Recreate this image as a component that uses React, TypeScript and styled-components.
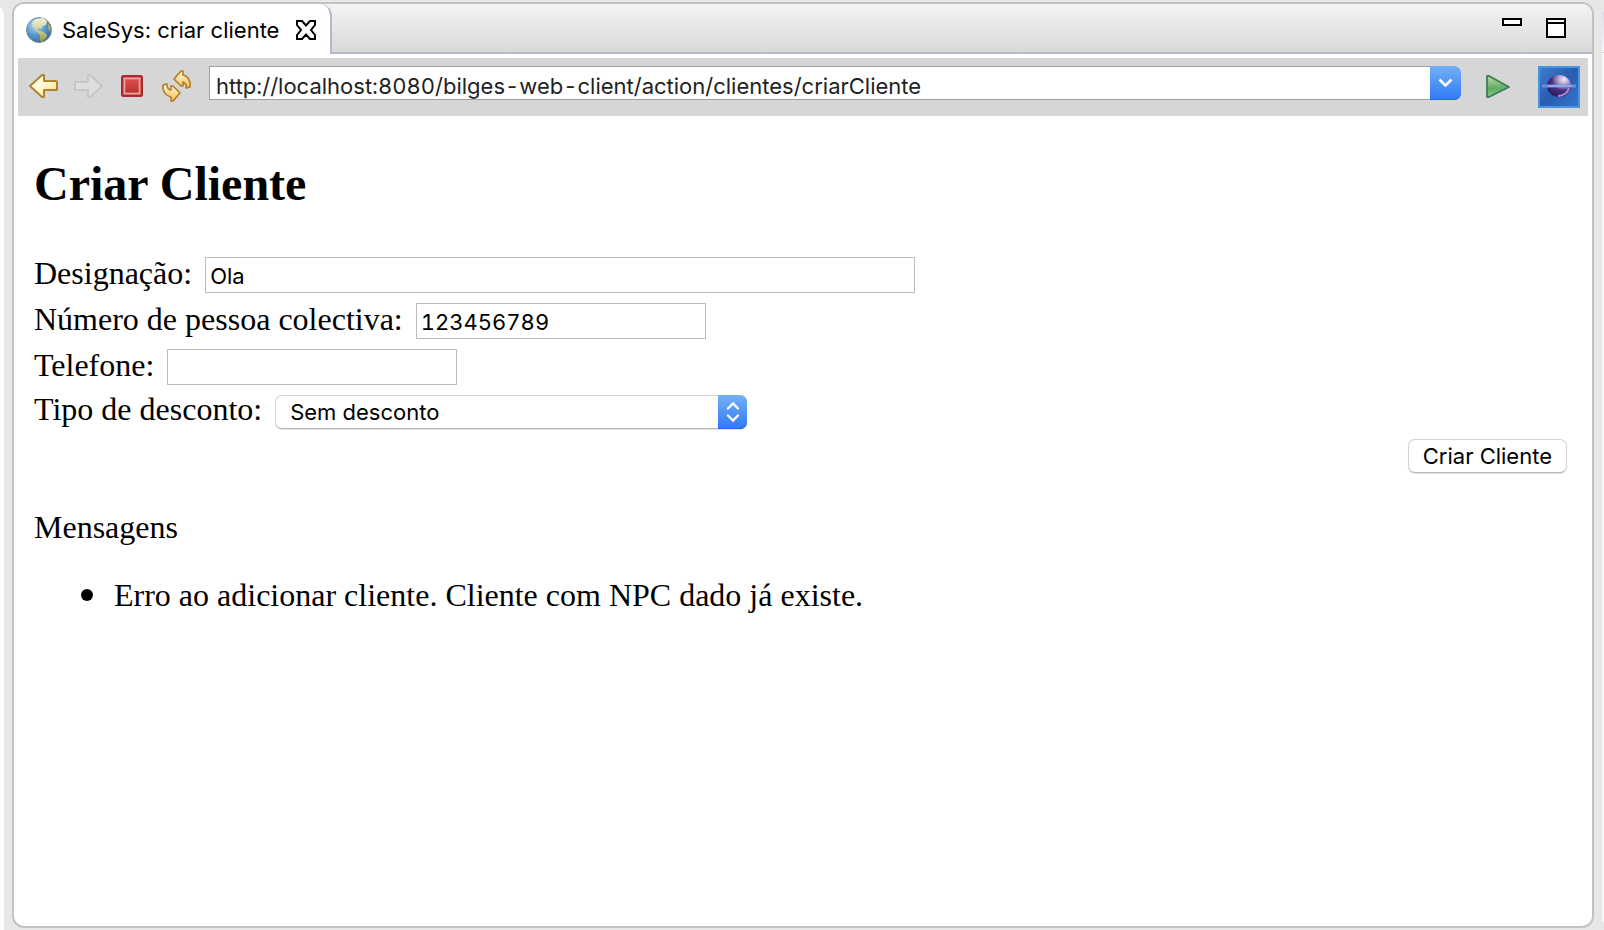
import React from "react";
import styled, { createGlobalStyle } from "styled-components";

const uiFont = `Inter, Roboto, "Liberation Sans", sans-serif`;
const pageFont = `"Liberation Serif", "Times New Roman", serif`;

const GlobalStyle = createGlobalStyle`
  *, *::before, *::after { box-sizing: border-box; }
  body { margin: 0; background: #e7e7e7; color: #000; }
`;

const Workbench = styled.div`
  display: flex;
  gap: 8px;
  min-height: 100vh;
`;

const LeftNeighbour = styled.div`
  flex: 0 0 4px;
  margin-top: 8px;
  background: #fcfcfc;
  border-top-right-radius: 4px 8px;
`;

const RightNeighbour = styled.div`
  flex: 0 0 2px;
  margin: 12px 0 8px;
  background: linear-gradient(#dcdce4, #f6f6f8 40px, #c8c8c8 40px, #c8c8c8 41px, #f8f8f8 41px);
`;

const View = styled.section`
  flex: 1;
  min-width: 0;
  display: flex;
  flex-direction: column;
  margin: 2px 0;
  border: 2px solid #c3c3be;
  border-radius: 12px;
  background: #fff;
  overflow: hidden;
`;

const TabBar = styled.header`
  display: flex;
  justify-content: space-between;
  height: 50px;
  background: linear-gradient(#f4f4f4, #d9d9d9);
  border-bottom: 2px solid #b2b9ca;
`;

const Tab = styled.div`
  display: flex;
  align-items: center;
  height: 50px;
  padding: 2px 14px 0 12px;
  background: #fff;
  border-right: 2px solid #b2b9ca;
  border-top-right-radius: 12px;
`;

const TabTitle = styled.span`
  margin: 0 17px 0 10px;
  font: 22px/28px ${uiFont};
  white-space: nowrap;
`;

const PlainButton = styled.button`
  display: flex;
  align-items: center;
  justify-content: center;
  flex: none;
  padding: 0;
  border: 0;
  background: none;
`;

const ViewControls = styled.div`
  display: flex;
  align-items: flex-start;
  gap: 24px;
  padding: 14px 26px 0 0;
`;

const Toolbar = styled.nav`
  display: flex;
  align-items: flex-start;
  height: 58px;
  margin: 4px 4px 0;
  padding: 8px 8px 0 10px;
  background: #d6d6d6;
`;

const ToolGroup = styled.div`
  display: flex;
  gap: 12px;
`;

const ToolButton = styled(PlainButton)`
  width: 32px;
  height: 40px;
`;

const AddressBox = styled.div`
  flex: 1;
  min-width: 0;
  display: flex;
  height: 34px;
  margin: 0 21px 0 17px;
`;

const AddressInput = styled.input`
  flex: 1;
  min-width: 0;
  padding: 6px 6px 0;
  border: 1px solid #a0a0a0;
  border-right: 0;
  border-radius: 0;
  outline: 0;
  background: #fff;
  color: #222;
  font: 22px/26px ${uiFont};
  font-variant-numeric: tabular-nums;
`;

const AddressArrow = styled(PlainButton)`
  width: 31px;
  border-radius: 0 7px 7px 0;
  background: linear-gradient(#74b0f6, #2f79f7);
  box-shadow: inset 0 -1px #2465ee;
`;

const Brand = styled.div`
  display: flex;
  margin-left: 24px;
`;

const Page = styled.main`
  padding: 0 21px 0 16px;
  margin: 0 4px;
  font: 32px/36px ${pageFont};
`;

const Title = styled.h2`
  margin: 40px 0 45px;
  font-size: 48px;
  line-height: 56px;
`;

const Form = styled.form`
  display: flex;
  flex-direction: column;
  gap: 10px;
`;

const Field = styled.div`
  display: flex;
  align-items: baseline;
  gap: 13px;
`;

const Label = styled.label`
  line-height: 28px;
  white-space: nowrap;
`;

const TextInput = styled.input<{ $wide?: boolean }>`
  width: ${(p) => (p.$wide ? 710 : 290)}px;
  height: 36px;
  padding: 2px 4px 0;
  border: 1px solid #bdbdbd;
  border-radius: 0;
  outline: 0;
  background: #fff;
  color: #000;
  font: 22px/28px ${uiFont};
  font-variant-numeric: tabular-nums;
`;

const SelectWrap = styled.div`
  position: relative;
  width: 472px;
`;

const Select = styled.select`
  display: block;
  appearance: none;
  width: 100%;
  height: 34px;
  padding: 0 40px 0 14px;
  border: 1px solid #d2d2d2;
  border-bottom-color: #b8b8b8;
  border-radius: 7px;
  outline: 0;
  background: #fff;
  box-shadow: 0 1px 1px #e4e4e4;
  color: #000;
  font: 22px/32px ${uiFont};
`;

const SelectArrows = styled.span`
  position: absolute;
  top: 0;
  right: 0;
  display: flex;
  align-items: center;
  justify-content: center;
  width: 29px;
  height: 34px;
  border-radius: 0 7px 7px 0;
  background: linear-gradient(#74b0f6, #2f79f7);
  box-shadow: inset 0 -1px #2465ee;
  pointer-events: none;
`;

const SubmitButton = styled.button`
  align-self: flex-end;
  height: 34px;
  padding: 0 14px;
  border: 1px solid #d2d2d2;
  border-bottom-color: #b8b8b8;
  border-radius: 7px;
  background: #fff;
  box-shadow: 0 1px 1px #e4e4e4;
  color: #000;
  font: 22px/30px ${uiFont};
`;

const Messages = styled.section`
  margin-top: 36px;
`;

const MessageHeading = styled.p`
  margin: 0 0 32px;
`;

const MessageList = styled.ul`
  margin: 0;
  padding-left: 47px;
  list-style: none;
`;

const Message = styled.li`
  display: flex;
  align-items: center;
  gap: 21px;

  &::before {
    content: "";
    flex: none;
    width: 12px;
    height: 12px;
    border-radius: 50%;
    background: #000;
  }
`;

const GlobeIcon = () => (
  <svg width="26" height="26" viewBox="0 0 26 26" aria-hidden="true">
    <defs>
      <radialGradient id="sea" cx=".35" cy=".3" r=".8">
        <stop offset="0" stopColor="#b9d8ee" />
        <stop offset=".5" stopColor="#5b9bcd" />
        <stop offset="1" stopColor="#3a5f8c" />
      </radialGradient>
      <linearGradient id="land" x1="0" y1="0" x2="0" y2="1">
        <stop offset="0" stopColor="#f4f0d2" />
        <stop offset=".5" stopColor="#d2cf9a" />
        <stop offset="1" stopColor="#8f9434" />
      </linearGradient>
    </defs>
    <circle cx="13" cy="13" r="12.5" fill="url(#sea)" stroke="#6c8296" strokeWidth=".8" />
    <path d="M6 5 10 2 17 1 21 4 20 8 17 9 15 12 12 11 11 13 14 14 18 15 21 18 20 21 16 25 14 24 14 18 10 14 7 10Z" fill="url(#land)" />
    <path d="M22 6 25 11 24 15 22 11Z" fill="#a5ab6c" />
  </svg>
);

const CloseIcon = () => (
  <svg width="20" height="20" viewBox="0 0 20 20" fill="#fff" stroke="#000" strokeWidth="2" aria-hidden="true">
    <path d="M1 1H6L10 5.5 14 1H19V5L15 10 19 15V19H14L10 14.5 6 19H1V15L5 10 1 5Z" />
  </svg>
);

const MinimizeIcon = () => (
  <svg width="20" height="8" viewBox="0 0 20 8" fill="#fff" stroke="#000" strokeWidth="2" aria-hidden="true">
    <path d="M1 1H19V7H1Z" />
  </svg>
);

const MaximizeIcon = () => (
  <svg width="20" height="20" viewBox="0 0 20 20" fill="#fff" stroke="#000" strokeWidth="2" aria-hidden="true">
    <path d="M1 1H19V19H1ZM1 5H19" />
  </svg>
);

const ArrowIcon = ({ forward }: { forward?: boolean }) => {
  const shape = forward
    ? "M3 9H16V2H18L30 13 18 24H16V17H3Z"
    : "M29 9V17H16V24H14L2 13 14 2H16V8H28Z";
  return (
    <svg width="32" height="26" viewBox="0 0 32 26" aria-hidden="true">
      <defs>
        <linearGradient id="gold" x1="0" y1="0" x2="1" y2="1">
          <stop offset="0" stopColor="#fff" />
          <stop offset=".5" stopColor="#fff8cf" />
          <stop offset="1" stopColor="#f5d77c" />
        </linearGradient>
      </defs>
      <path
        d={shape}
        fill={forward ? "#dedede" : "url(#gold)"}
        stroke={forward ? "#c6c6c6" : "#b0842d"}
        strokeWidth="2"
        strokeLinejoin="round"
      />
    </svg>
  );
};

const StopIcon = () => (
  <svg width="22" height="22" viewBox="0 0 22 22" aria-hidden="true">
    <defs>
      <linearGradient id="red" x1="0" y1="0" x2="0" y2="1">
        <stop offset="0" stopColor="#db504b" />
        <stop offset="1" stopColor="#b9302e" />
      </linearGradient>
    </defs>
    <rect x="1" y="1" width="20" height="20" rx="1.5" fill="#cc5250" stroke="#ae2830" strokeWidth="2" />
    <rect x="3.5" y="3.5" width="15" height="15" fill="url(#red)" stroke="#eba5a3" strokeWidth="1.6" />
  </svg>
);

const RefreshIcon = () => (
  <svg width="32" height="32" viewBox="-2 0 32 32" aria-hidden="true">
    <defs>
      <linearGradient id="amber" x1="0" y1="0" x2="0" y2="1">
        <stop offset="0" stopColor="#fffbe2" />
        <stop offset="1" stopColor="#f2bf52" />
      </linearGradient>
    </defs>
    <g fill="url(#amber)" stroke="#b37d22" strokeWidth="1.6" strokeLinejoin="round">
      <path d="M12 9 19 1H21V5C26 6 29 11 28 17L24 18C25 15 23 13 21 12V16H19Z" />
      <path d="M18 23 11 31H9V27C4 26 0 21 1 15L5 14C5 18 7 20 9 20V16H11Z" />
    </g>
  </svg>
);

const ChevronIcon = () => (
  <svg width="15" height="10" viewBox="0 0 15 10" fill="none" stroke="#fff" strokeWidth="2.6" aria-hidden="true">
    <path d="M1.5 1.5 7.5 7.5 13.5 1.5" />
  </svg>
);

const UpDownIcon = () => (
  <svg width="14" height="22" viewBox="0 0 14 22" fill="none" stroke="#fff" strokeWidth="2.4" strokeLinecap="round" aria-hidden="true">
    <path d="M2 7.5 7 2.5 12 7.5M2 14.5 7 19.5 12 14.5" />
  </svg>
);

const GoIcon = () => (
  <svg width="24" height="24" viewBox="0 0 24 24" aria-hidden="true">
    <defs>
      <linearGradient id="green" x1="0" y1="0" x2="0" y2="1">
        <stop offset="0" stopColor="#b4dba0" />
        <stop offset=".6" stopColor="#62aa66" />
        <stop offset="1" stopColor="#8cc787" />
      </linearGradient>
    </defs>
    <path d="M1 2H3L23 13 3 23H1Z" fill="url(#green)" stroke="#3d7d58" strokeWidth="1.8" strokeLinejoin="round" />
  </svg>
);

const EclipseLogo = () => (
  <svg width="42" height="42" viewBox="0 0 42 42" role="img" aria-label="Eclipse">
    <defs>
      <linearGradient id="sky" x1="0" y1="0" x2="1" y2="1">
        <stop offset="0" stopColor="#3f7fd0" />
        <stop offset=".5" stopColor="#2a5cb0" />
        <stop offset="1" stopColor="#3576cc" />
      </linearGradient>
      <radialGradient id="moon" cx=".7" cy=".2" r=".85">
        <stop offset="0" stopColor="#f0edf4" />
        <stop offset=".3" stopColor="#a89cc8" />
        <stop offset=".6" stopColor="#42307f" />
        <stop offset="1" stopColor="#2c1a60" />
      </radialGradient>
    </defs>
    <rect x="1" y="1" width="40" height="40" fill="url(#sky)" stroke="#4596e2" strokeWidth="2" />
    <ellipse cx="21" cy="20" rx="12" ry="11" fill="url(#moon)" />
    <path d="M31 22A11 10 0 0 1 20 30" fill="none" stroke="#b583d8" strokeWidth="2" />
    <path d="M4 20H38" stroke="#6a8ade" strokeWidth="3" />
    <path d="M10 20H34" stroke="#9aa4e8" strokeWidth="2" />
  </svg>
);

export default function App() {
  return (
    <>
      <GlobalStyle />
      <Workbench>
        <LeftNeighbour />
        <View>
          <TabBar>
            <Tab>
              <GlobeIcon />
              <TabTitle>SaleSys: criar cliente</TabTitle>
              <PlainButton type="button" aria-label="Fechar">
                <CloseIcon />
              </PlainButton>
            </Tab>
            <ViewControls>
              <PlainButton type="button" aria-label="Minimizar">
                <MinimizeIcon />
              </PlainButton>
              <PlainButton type="button" aria-label="Maximizar">
                <MaximizeIcon />
              </PlainButton>
            </ViewControls>
          </TabBar>
          <Toolbar>
            <ToolGroup>
              <ToolButton type="button" aria-label="Recuar">
                <ArrowIcon />
              </ToolButton>
              <ToolButton type="button" aria-label="Avançar" disabled>
                <ArrowIcon forward />
              </ToolButton>
              <ToolButton type="button" aria-label="Parar">
                <StopIcon />
              </ToolButton>
              <ToolButton type="button" aria-label="Atualizar">
                <RefreshIcon />
              </ToolButton>
            </ToolGroup>
            <AddressBox>
              <AddressInput
                type="text"
                aria-label="Endereço"
                defaultValue="http://localhost:8080/bilges-web-client/action/clientes/criarCliente"
              />
              <AddressArrow type="button" aria-label="Histórico">
                <ChevronIcon />
              </AddressArrow>
            </AddressBox>
            <ToolButton type="button" aria-label="Ir">
              <GoIcon />
            </ToolButton>
            <Brand>
              <EclipseLogo />
            </Brand>
          </Toolbar>
          <Page>
            <Title>Criar Cliente</Title>
            <Form onSubmit={(e) => e.preventDefault()}>
              <Field>
                <Label htmlFor="designacao">Designação:</Label>
                <TextInput id="designacao" type="text" $wide defaultValue="Ola" />
              </Field>
              <Field>
                <Label htmlFor="npc">Número de pessoa colectiva:</Label>
                <TextInput id="npc" type="text" defaultValue="123456789" />
              </Field>
              <Field>
                <Label htmlFor="telefone">Telefone:</Label>
                <TextInput id="telefone" type="text" />
              </Field>
              <Field>
                <Label htmlFor="desconto">Tipo de desconto:</Label>
                <SelectWrap>
                  <Select id="desconto" defaultValue="sem">
                    <option value="sem">Sem desconto</option>
                  </Select>
                  <SelectArrows>
                    <UpDownIcon />
                  </SelectArrows>
                </SelectWrap>
              </Field>
              <SubmitButton type="submit">Criar Cliente</SubmitButton>
            </Form>
            <Messages>
              <MessageHeading>Mensagens</MessageHeading>
              <MessageList>
                <Message>Erro ao adicionar cliente. Cliente com NPC dado já existe.</Message>
              </MessageList>
            </Messages>
          </Page>
        </View>
        <RightNeighbour />
      </Workbench>
    </>
  );
}
